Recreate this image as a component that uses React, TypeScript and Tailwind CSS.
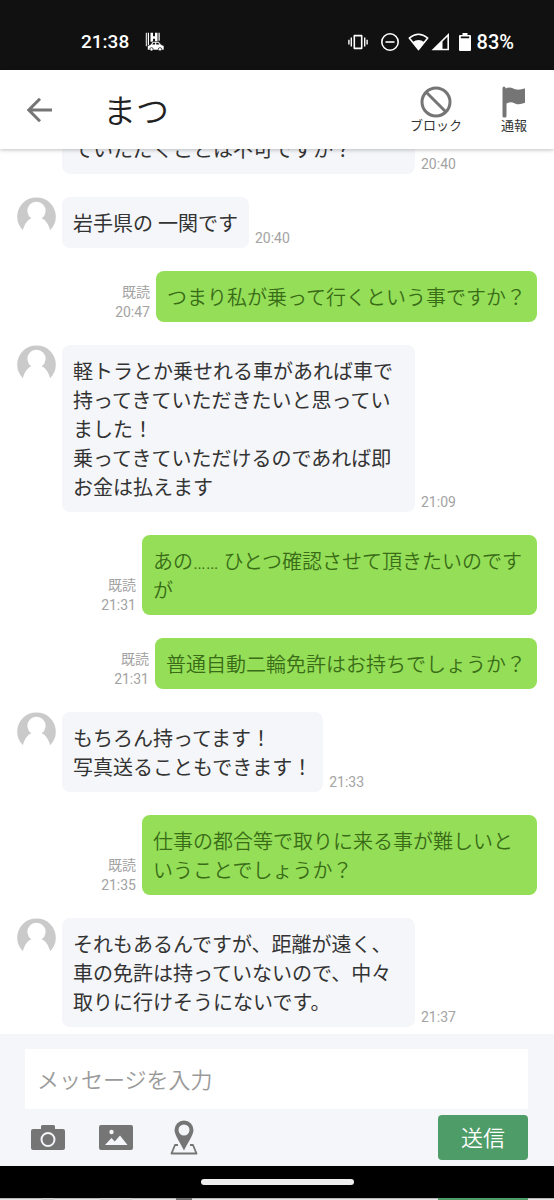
import type { ReactNode } from "react";

type Message = { mine?: boolean; time: string; text: string; continued?: boolean };

const messages: Message[] = [
  { time: "20:40", text: "ていただくことは不可ですか？", continued: true },
  { time: "20:40", text: "岩手県の 一関です" },
  { mine: true, time: "20:47", text: "つまり私が乗って行くという事ですか？" },
  {
    time: "21:09",
    text: "軽トラとか乗せれる車があれば車で持ってきていただきたいと思っていました！\n乗ってきていただけるのであれば即お金は払えます",
  },
  { mine: true, time: "21:31", text: "あの…… ひとつ確認させて頂きたいのですが" },
  { mine: true, time: "21:31", text: "普通自動二輪免許はお持ちでしょうか？" },
  { time: "21:33", text: "もちろん持ってます！\n写真送ることもできます！" },
  { mine: true, time: "21:35", text: "仕事の都合等で取りに来る事が難しいということでしょうか？" },
  { time: "21:37", text: "それもあるんですが、距離が遠く、車の免許は持っていないので、中々取りに行けそうにないです。" },
];

function Avatar() {
  return (
    <svg viewBox="0 0 40 40" className="h-[39px] w-full" aria-hidden="true">
      <path
        fill="#cacaca"
        d="M6 34.2A19.8 19.8 0 1 1 34 34.2C32.300 27.500 29 23.300 25.300 21.800A9.300 9.300 0 1 0 14.700 21.800C11 23.300 7.700 27.500 6 34.200Z"
      />
    </svg>
  );
}

function Row({ message }: { message: Message }) {
  if (message.mine) {
    return (
      <li className="flex items-end justify-end gap-1.5">
        <div className="shrink-0 text-right text-sm leading-5 text-[#a3a3a3]">
          <p>既読</p>
          <time className="block">{message.time}</time>
        </div>
        <p className="max-w-[395px] whitespace-pre-wrap rounded-lg bg-[#94df57] px-[11px] pt-[13px] pb-[9px] text-xl leading-[29px] font-[350] text-[#3a6c17]">
          {message.text}
        </p>
      </li>
    );
  }
  return (
    <li className="flex items-end gap-1.5">
      <div className="w-[39px] shrink-0 self-start">{!message.continued && <Avatar />}</div>
      <p
        className={`max-w-[353px] whitespace-pre-wrap rounded-lg bg-[#f5f6f9] px-[11px] pt-[13px] pb-[9px] text-xl leading-[29px] text-[#333] ${
          message.continued ? "flex-1" : ""
        }`}
      >
        {message.text}
      </p>
      <time className="shrink-0 text-sm leading-5 text-[#a3a3a3]">{message.time}</time>
    </li>
  );
}

function StatusBar() {
  return (
    <div className="flex h-[70px] shrink-0 items-end justify-between bg-[#111] pr-10 pb-[14px] pl-[81px] text-white">
      <div className="flex items-center gap-4">
        <span className="text-[19px] leading-7 font-medium">21:38</span>
        <svg viewBox="0 0 20 20" className="size-5" fill="#fff" aria-hidden="true">
          <path d="M.8.800h1v13.500h-1zM2.800.800h1.200v12.500H2.800zM5.500.800H8v3.500h2V.800h2.500v9H10V6.800H8v3H5.500zM13.500.800h1.200v8h-1.200z" />
          <path stroke="#111" strokeWidth=".6" d="M2.500 18v-4.200l3.200-1.200L7.500 9.600h6.200l2.300 3 3 1.200v4.200z" />
          <path fill="#111" d="M8.300 10.800h1.800v1.800H7.200zM11.200 10.800h1.900l1.300 1.800h-3.200z" />
          <circle cx="6.500" cy="17.300" r="1.700" stroke="#111" strokeWidth=".7" />
          <circle cx="15" cy="17.300" r="1.700" stroke="#111" strokeWidth=".7" />
        </svg>
      </div>
      <div className="flex items-center">
        <svg viewBox="0 0 20 20" className="size-5" fill="#fff" aria-hidden="true">
          <path fillRule="evenodd" d="M6.500 2.800h7q1 0 1 1v12.400q0 1-1 1h-7q-1 0-1-1V3.800q0-1 1-1zm.6 1.700v11h5.800v-11z" />
          <path d="M2.600 5.500H4v9H2.600zM.2 7.800h1.400v4.600H.2zM16 5.500h1.400v9H16zM18.400 7.800h1.400v4.600h-1.400z" />
        </svg>
        <svg viewBox="0 0 20 20" className="ml-3 size-5" fill="none" stroke="#fff" strokeWidth="1.600" aria-hidden="true">
          <circle cx="10" cy="10" r="8.200" />
          <path d="M5.500 10h9" />
        </svg>
        <svg viewBox="0 0 21 20" className="ml-2 h-5 w-[21px]" aria-hidden="true">
          <path fill="none" stroke="#fff" strokeWidth="1.600" strokeLinejoin="round" d="M1.300 6Q10.500-1.500 19.700 6L10.500 17.600z" />
          <path fill="#fff" d="M4.800 10Q10.500 6 16.200 10L10.500 18z" />
        </svg>
        <svg viewBox="0 0 20 20" className="ml-0.5 size-5" aria-hidden="true">
          <path fill="#fff" fillRule="evenodd" d="M.5 18.300L18 1v17.300zM11.500 9.500v7.200h4.900V4.800z" />
        </svg>
        <svg viewBox="0 0 12 20" className="ml-2 h-5 w-3" fill="#fff" aria-hidden="true">
          <path fillRule="evenodd" d="M3.500 1h5v2H11q1 0 1 1v14q0 1-1 1H1q-1 0-1-1V4q0-1 1-1h2.500zM1.800 4.600v1.600h8.400V4.600z" />
        </svg>
        <span className="ml-1.5 text-xl leading-7 font-medium">83%</span>
      </div>
    </div>
  );
}

function HeaderAction({ label, children }: { label: string; children: ReactNode }) {
  return (
    <button type="button" className="flex flex-col items-center text-[13px] leading-4 text-[#333]">
      {children}
      <span>{label}</span>
    </button>
  );
}

export default function App() {
  return (
    <div className="flex h-screen flex-col overflow-hidden bg-white font-[Roboto,'Noto_Sans_CJK_JP',sans-serif]">
      <StatusBar />
      <header className="z-10 flex h-[79px] shrink-0 items-center bg-white pr-6 pl-[23px] shadow-[0_1px_4px_rgba(0,0,0,0.25)]">
        <button type="button" aria-label="戻る">
          <svg viewBox="0 0 32 32" className="size-8" fill="none" stroke="#757575" strokeWidth="3" aria-hidden="true">
            <path d="M29 16H7M17 4.800L5.800 16 17 27.200" />
          </svg>
        </button>
        <h1 className="ml-12 flex-1 pt-1 text-[33px] leading-10 font-[350] text-[#212121]">まつ</h1>
        <div className="flex gap-9">
          <HeaderAction label="ブロック">
            <svg viewBox="0 0 32 32" className="size-8" fill="none" stroke="#757575" strokeWidth="3" aria-hidden="true">
              <circle cx="16" cy="16" r="14" />
              <path d="M6 6l20 20" />
            </svg>
          </HeaderAction>
          <HeaderAction label="通報">
            <svg viewBox="0 0 32 32" className="size-8" fill="#757575" aria-hidden="true">
              <path d="M4.500 2Q4.500.5 6 .5T7.500 2v.6c5-2.800 8 .8 11.500 1 3 .2 5.500-.8 8-1.200v14.400c-4 1.600-7 2-10 .6-3.500-1.600-6-1.600-8.500.2v12.500q0 1.500-1.500 1.500H6q-1.500 0-1.500-1.500z" />
            </svg>
          </HeaderAction>
        </div>
      </header>

      <main className="flex min-h-0 flex-1 flex-col justify-end overflow-hidden px-[17px] pb-[7px]">
        <ul className="flex flex-col gap-[23px]">
          {messages.map((message, index) => (
            <Row key={index} message={message} />
          ))}
        </ul>
      </main>

      <form className="shrink-0 bg-[#f5f6f9] pt-[15px] pr-[26px] pb-1.5 pl-[25px]" onSubmit={(event) => event.preventDefault()}>
        <input
          type="text"
          aria-label="メッセージを入力"
          placeholder="メッセージを入力"
          className="block h-[60px] w-full bg-white px-3 pt-0.5 text-[22px] font-[350] text-[#333] outline-none placeholder:text-[#9a9a9a]"
        />
        <div className="mt-1.5 flex items-center">
          <button type="button" aria-label="カメラ" className="ml-1">
            <svg viewBox="0 0 38 38" className="size-[38px]" aria-hidden="true">
              <path
                fill="#757575"
                d="M4 10h8V7.500Q12 6 13.500 6h11Q26 6 26 7.500V10h8q2 0 2 2v17q0 2-2 2H4q-2 0-2-2V12q0-2 2-2z"
              />
              <circle cx="19" cy="20.500" r="6.500" fill="none" stroke="#f5f6f9" strokeWidth="2" />
            </svg>
          </button>
          <button type="button" aria-label="画像" className="ml-[30px]">
            <svg viewBox="0 0 38 38" className="size-[38px]" aria-hidden="true">
              <rect x="2" y="6" width="34" height="25" rx="2" fill="#757575" />
              <circle cx="14.500" cy="13" r="2.200" fill="#f5f6f9" />
              <path fill="#f5f6f9" d="M8 26l6.500-7 3.200 3.500L23 16.500l7.500 9.500z" />
            </svg>
          </button>
          <button type="button" aria-label="位置情報" className="ml-[30px]">
            <svg viewBox="0 0 38 38" className="size-[38px]" aria-hidden="true">
              <path fill="none" stroke="#757575" strokeWidth="1.800" strokeLinejoin="round" d="M13 26h-3L6.500 34.500h25L28 26h-3" />
              <path
                fill="#757575"
                fillRule="evenodd"
                d="M19 1.500a9.500 9.500 0 0 1 9.500 9.500C28.500 16 22 25 19 31.500 16 25 9.500 16 9.500 11A9.500 9.500 0 0 1 19 1.500zm0 4a5.500 5.500 0 1 0 0 11 5.500 5.500 0 0 0 0-11z"
              />
            </svg>
          </button>
          <button
            type="submit"
            className="ml-auto h-[45px] w-[90px] rounded bg-[#4e9c67] pt-[3px] text-[22px] leading-8 font-[350] text-white"
          >
            送信
          </button>
        </div>
      </form>

      <div className="flex h-8 shrink-0 items-center justify-center bg-black">
        <div className="h-1.5 w-[153px] rounded-full bg-[#eee]" />
      </div>
      <div className="flex h-0.5 shrink-0 bg-linear-to-b from-[#a0a0a0] to-white pr-[26px] pl-[42px]">
        <div className="w-3 bg-[#cfcfcf]" />
        <div className="ml-[46px] w-8 bg-[#cfcfcf]" />
        <div className="ml-11 w-4 bg-[#757575]" />
        <div className="ml-auto w-[90px] bg-[#4e9c67]" />
      </div>
    </div>
  );
}
